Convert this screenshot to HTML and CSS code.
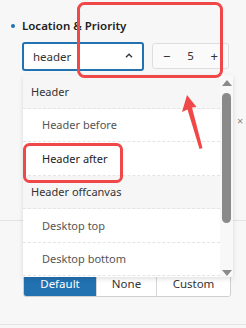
FILE: index.html
```html
<!DOCTYPE html>
<html lang="en">
<head>
    <meta charset="UTF-8">
    <meta name="viewport" content="width=device-width, initial-scale=1.0">
    <title>Location &amp; Priority</title>
    <link rel="stylesheet" href="styles.css">
</head>
<body>
    <div class="panel">
        <div class="field">
            <div class="field-label">Location &amp; Priority</div>
            <div class="controls">
                <div class="select">
                    <span>header</span>
                    <svg class="chevron" width="8" height="5" viewBox="0 0 8 5">
                        <path d="M1 4.2 L4 1.2 L7 4.2" fill="none" stroke="#333" stroke-width="1.3"/>
                    </svg>
                </div>
                <div class="number">
                    <span class="step">&minus;</span>
                    <span class="value">5</span>
                    <span class="step">+</span>
                </div>
            </div>
        </div>

        <div class="divider"></div>

        <div class="buttons">
            <button class="btn active">Default</button>
            <button class="btn">None</button>
            <button class="btn">Custom</button>
        </div>

        <div class="divider bottom"></div>

        <span class="remove">&times;</span>

        <div class="dropdown">
            <ul class="options">
                <li class="group">Header</li>
                <li class="option">Header before</li>
                <li class="option">Header after</li>
                <li class="group">Header offcanvas</li>
                <li class="option">Desktop top</li>
                <li class="option">Desktop bottom</li>
            </ul>
            <div class="scrollbar">
                <span class="arrow up"></span>
                <span class="thumb"></span>
                <span class="arrow down"></span>
            </div>
        </div>

        <svg class="marks" width="246" height="328" viewBox="0 0 246 328">
            <rect x="78.5" y="3.5" width="143" height="73" rx="6" fill="none" stroke="#f04848" stroke-width="3"/>
            <rect x="24.5" y="144.5" width="97" height="37" rx="5" fill="none" stroke="#f04848" stroke-width="3"/>
            <polygon points="187,95 182,112 187.5,109.5 199.5,149 202.5,148 192,107.5 196.5,107" fill="#f04848"/>
        </svg>
    </div>
</body>
</html>
```

FILE: styles.css
```css
body {
    margin: 0;
    background: #f7f7f7;
    font-family: 'Noto Sans', 'Open Sans', sans-serif;
    font-size: 11px;
    color: #333;
}

.panel {
    position: relative;
    width: 246px;
    height: 328px;
    overflow: hidden;
}

.field {
    padding: 18px 0 0 22px;
}

.field-label {
    position: relative;
    font-weight: 600;
    font-size: 11.5px;
    line-height: 16px;
    color: #222;
}

.field-label::before {
    content: "";
    position: absolute;
    left: -11px;
    top: 6px;
    width: 4px;
    height: 4px;
    border-radius: 50%;
    background: #2271b1;
}

.controls {
    display: flex;
    align-items: flex-start;
    gap: 8px;
    margin-top: 8px;
}

.select {
    box-sizing: border-box;
    width: 122px;
    height: 29px;
    padding: 0 9px 0 9px;
    border: 2px solid #2271b1;
    border-radius: 3px;
    background: #fff;
    display: flex;
    align-items: center;
    justify-content: space-between;
    font-size: 11.5px;
}

.chevron {
    margin-bottom: 2px;
}

.number {
    box-sizing: border-box;
    width: 77px;
    height: 26px;
    margin-top: 1px;
    padding: 0 10px 1px 10px;
    border: 1px solid #dedede;
    border-radius: 3px;
    background: #fafafa;
    display: flex;
    align-items: center;
    justify-content: space-between;
}

.step {
    font-size: 13px;
    color: #333;
}

.value {
    font-size: 11.5px;
}

.divider {
    margin-top: 149px;
    border-top: 1px solid #e3e3e3;
}

.divider.bottom {
    margin-top: 27px;
}

.buttons {
    display: flex;
    margin: 49px 0 0 23px;
    width: 206px;
    border: 1px solid #cfcfcf;
    border-radius: 3px;
    overflow: hidden;
}

.btn {
    height: 25px;
    padding: 0;
    border: none;
    border-left: 1px solid #d6d6d6;
    background: #fff;
    font-family: inherit;
    font-size: 11.5px;
    color: #333;
}

.btn:first-child {
    border-left: none;
    width: 72px;
}

.btn:nth-child(2) {
    width: 60px;
}

.btn:nth-child(3) {
    flex: 1;
}

.btn.active {
    background: #2271b1;
    color: #fff;
}

.remove {
    position: absolute;
    left: 237px;
    top: 113px;
    font-size: 11px;
    color: #888;
}

.dropdown {
    position: absolute;
    left: 23px;
    top: 75px;
    width: 210px;
    height: 202px;
    background: #fff;
    box-shadow: 0 2px 5px rgba(0, 0, 0, 0.12);
    display: flex;
}

.options {
    flex: 1;
    margin: 0;
    padding: 0;
    list-style: none;
}

.options li {
    box-sizing: border-box;
    height: 33.5px;
    display: flex;
    align-items: center;
    border-bottom: 1px dashed #e4e4e4;
    font-size: 11px;
}

.group {
    padding-left: 8px;
    background: #f6f6f6;
    color: #333;
}

.option {
    padding-left: 19px;
    color: #555;
}

.option:nth-child(3) {
    color: #222;
}

.scrollbar {
    width: 13px;
    background: #f8f8f8;
    display: flex;
    flex-direction: column;
    align-items: center;
    padding-top: 5px;
}

.arrow {
    width: 0;
    height: 0;
    border-left: 5px solid transparent;
    border-right: 5px solid transparent;
}

.arrow.up {
    border-bottom: 6px solid #8a8a8a;
}

.arrow.down {
    margin-top: 47px;
    border-top: 6px solid #8a8a8a;
}

.thumb {
    width: 9px;
    height: 130px;
    margin-top: 7px;
    border-radius: 5px;
    background: #8a8a8a;
}

.marks {
    position: absolute;
    left: 0;
    top: 0;
    pointer-events: none;
}
```
